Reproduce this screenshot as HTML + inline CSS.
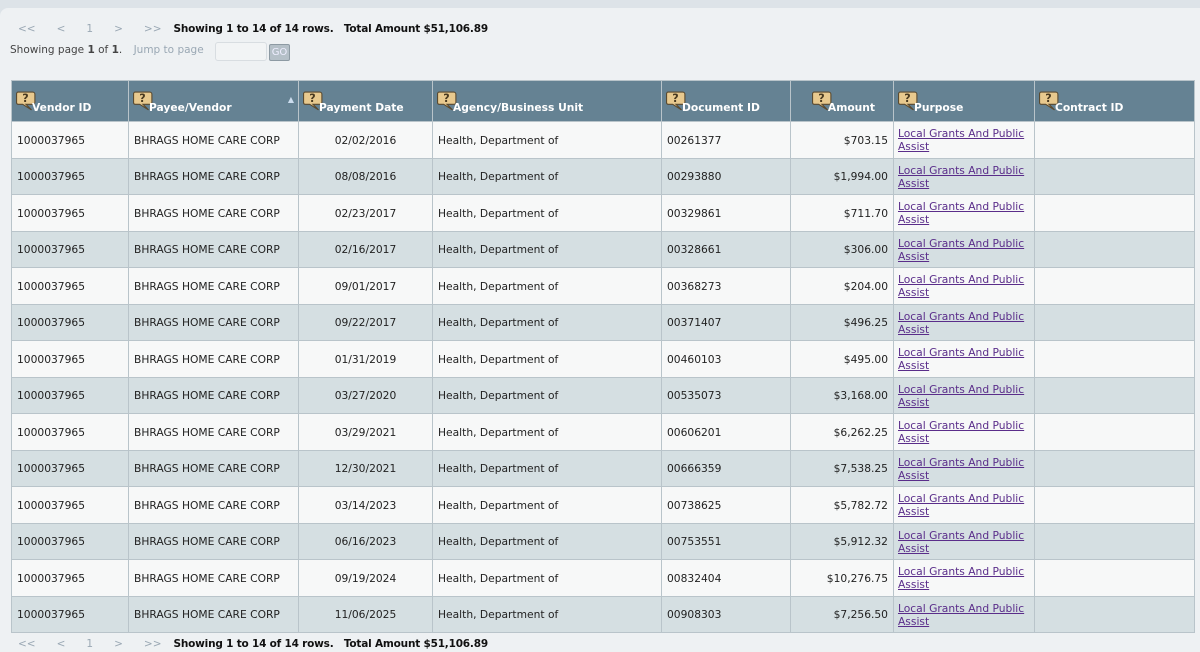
<!DOCTYPE html>
<html><head><meta charset="utf-8"><style>
html,body{margin:0;width:1200px;height:652px;overflow:hidden}
body{background:#dde3e8;font-family:"DejaVu Sans",Verdana,sans-serif;font-size:10.7px;color:#222;position:relative}
.panel{position:absolute;left:0;top:8px;width:1200px;height:644px;background:#eef1f3;border-radius:8px 0 0 0}
.pg{position:absolute;left:18px;font-size:10.5px;color:#9aa8b4}
.pg span{margin-right:21px}
.pg b{color:#111;font-size:10.5px;letter-spacing:-0.2px}
.sp{position:absolute;left:10px;top:44px;color:#444;font-size:10.5px}
.sp .j{color:#9aa8b4;margin-left:8px}
.inp{position:absolute;left:215px;top:42px;width:50px;height:17px;border:1px solid #d8dde1;border-radius:3px;background:#f2f4f5}
.go{position:absolute;left:269px;top:44px;width:19px;height:15px;background:#b5c0c8;border:1px solid #8d9aa3;border-radius:2px;color:#eef;font-size:10px;text-align:center;line-height:15px}
table{position:absolute;left:11px;top:80px;border-collapse:collapse;table-layout:fixed;width:1183px}
td,th{border:1px solid #b9c4ca;padding:0 5px;overflow:hidden}
td{white-space:nowrap}
thead tr{height:41px}
th{background:#658293;color:#fff;font-weight:bold;text-align:left;font-size:10.7px;padding:0 4px 7px;vertical-align:bottom;white-space:nowrap}
th svg{vertical-align:0px;margin-right:-4px}
tbody tr:nth-child(odd) td{background:#f7f8f8}
tbody tr:nth-child(even) td{background:#d5dfe2}
tbody tr:nth-child(odd){height:37px}tbody tr:nth-child(even){height:36px}
td.c{text-align:center}td.r{text-align:right}
td.p{white-space:normal;padding:0 4px}
td a{color:#5a2d8a;text-decoration:underline;line-height:13px;display:block}
</style></head><body>
<div class="panel"></div>
<div class="pg" style="top:23px"><span>&lt;&lt;</span><span>&lt;</span><span>1</span><span>&gt;</span><span style="margin-right:12px">&gt;&gt;</span><b>Showing 1 to 14 of 14 rows. &nbsp; Total Amount $51,106.89</b></div>
<div class="sp">Showing page <b>1</b> of <b>1</b>. <span class="j">Jump to page</span></div>
<div class="inp"></div><div class="go">GO</div>
<svg width="0" height="0" style="position:absolute"><defs><symbol id="q" viewBox="0 0 18 18"><path d="M2 1h13a2 2 0 0 1 2 2v7a2 2 0 0 1-2 2H9l5 5-8-5H2a1.5 1.5 0 0 1-1.5-1.5V2.5A1.5 1.5 0 0 1 2 1z" fill="#e8c98e" stroke="#5a4a30" stroke-width="1"/><text x="8.5" y="10" font-size="10" text-anchor="middle" fill="#4a3a20" font-family="DejaVu Sans">?</text></symbol></defs></svg>
<table>
<colgroup><col style="width:117px"><col style="width:170px"><col style="width:134px"><col style="width:229px"><col style="width:129px"><col style="width:103px"><col style="width:141px"><col style="width:160px"></colgroup>
<thead><tr>
<th><svg width="20" height="20"><use href="#q"/></svg>Vendor ID</th>
<th><svg width="20" height="20"><use href="#q"/></svg>Payee/Vendor<span style="float:right;font-size:8px;color:#cde;margin-top:4px">▲</span></th>
<th><svg width="20" height="20"><use href="#q"/></svg>Payment Date</th>
<th><svg width="20" height="20"><use href="#q"/></svg>Agency/Business Unit</th>
<th><svg width="20" height="20"><use href="#q"/></svg>Document ID</th>
<th style="text-align:right;padding-right:18px"><svg width="20" height="20"><use href="#q"/></svg>Amount</th>
<th><svg width="20" height="20"><use href="#q"/></svg>Purpose</th>
<th><svg width="20" height="20"><use href="#q"/></svg>Contract ID</th>
</tr></thead>
<tbody>
<tr><td>1000037965</td><td>BHRAGS HOME CARE CORP</td><td class="c">02/02/2016</td><td>Health, Department of</td><td>00261377</td><td class="r">$703.15</td><td class="p"><a>Local Grants And Public Assist</a></td><td></td></tr>
<tr><td>1000037965</td><td>BHRAGS HOME CARE CORP</td><td class="c">08/08/2016</td><td>Health, Department of</td><td>00293880</td><td class="r">$1,994.00</td><td class="p"><a>Local Grants And Public Assist</a></td><td></td></tr>
<tr><td>1000037965</td><td>BHRAGS HOME CARE CORP</td><td class="c">02/23/2017</td><td>Health, Department of</td><td>00329861</td><td class="r">$711.70</td><td class="p"><a>Local Grants And Public Assist</a></td><td></td></tr>
<tr><td>1000037965</td><td>BHRAGS HOME CARE CORP</td><td class="c">02/16/2017</td><td>Health, Department of</td><td>00328661</td><td class="r">$306.00</td><td class="p"><a>Local Grants And Public Assist</a></td><td></td></tr>
<tr><td>1000037965</td><td>BHRAGS HOME CARE CORP</td><td class="c">09/01/2017</td><td>Health, Department of</td><td>00368273</td><td class="r">$204.00</td><td class="p"><a>Local Grants And Public Assist</a></td><td></td></tr>
<tr><td>1000037965</td><td>BHRAGS HOME CARE CORP</td><td class="c">09/22/2017</td><td>Health, Department of</td><td>00371407</td><td class="r">$496.25</td><td class="p"><a>Local Grants And Public Assist</a></td><td></td></tr>
<tr><td>1000037965</td><td>BHRAGS HOME CARE CORP</td><td class="c">01/31/2019</td><td>Health, Department of</td><td>00460103</td><td class="r">$495.00</td><td class="p"><a>Local Grants And Public Assist</a></td><td></td></tr>
<tr><td>1000037965</td><td>BHRAGS HOME CARE CORP</td><td class="c">03/27/2020</td><td>Health, Department of</td><td>00535073</td><td class="r">$3,168.00</td><td class="p"><a>Local Grants And Public Assist</a></td><td></td></tr>
<tr><td>1000037965</td><td>BHRAGS HOME CARE CORP</td><td class="c">03/29/2021</td><td>Health, Department of</td><td>00606201</td><td class="r">$6,262.25</td><td class="p"><a>Local Grants And Public Assist</a></td><td></td></tr>
<tr><td>1000037965</td><td>BHRAGS HOME CARE CORP</td><td class="c">12/30/2021</td><td>Health, Department of</td><td>00666359</td><td class="r">$7,538.25</td><td class="p"><a>Local Grants And Public Assist</a></td><td></td></tr>
<tr><td>1000037965</td><td>BHRAGS HOME CARE CORP</td><td class="c">03/14/2023</td><td>Health, Department of</td><td>00738625</td><td class="r">$5,782.72</td><td class="p"><a>Local Grants And Public Assist</a></td><td></td></tr>
<tr><td>1000037965</td><td>BHRAGS HOME CARE CORP</td><td class="c">06/16/2023</td><td>Health, Department of</td><td>00753551</td><td class="r">$5,912.32</td><td class="p"><a>Local Grants And Public Assist</a></td><td></td></tr>
<tr><td>1000037965</td><td>BHRAGS HOME CARE CORP</td><td class="c">09/19/2024</td><td>Health, Department of</td><td>00832404</td><td class="r">$10,276.75</td><td class="p"><a>Local Grants And Public Assist</a></td><td></td></tr>
<tr><td>1000037965</td><td>BHRAGS HOME CARE CORP</td><td class="c">11/06/2025</td><td>Health, Department of</td><td>00908303</td><td class="r">$7,256.50</td><td class="p"><a>Local Grants And Public Assist</a></td><td></td></tr>
</tbody></table>
<div class="pg" style="top:638px"><span>&lt;&lt;</span><span>&lt;</span><span>1</span><span>&gt;</span><span style="margin-right:12px">&gt;&gt;</span><b>Showing 1 to 14 of 14 rows. &nbsp; Total Amount $51,106.89</b></div>
</body></html>
